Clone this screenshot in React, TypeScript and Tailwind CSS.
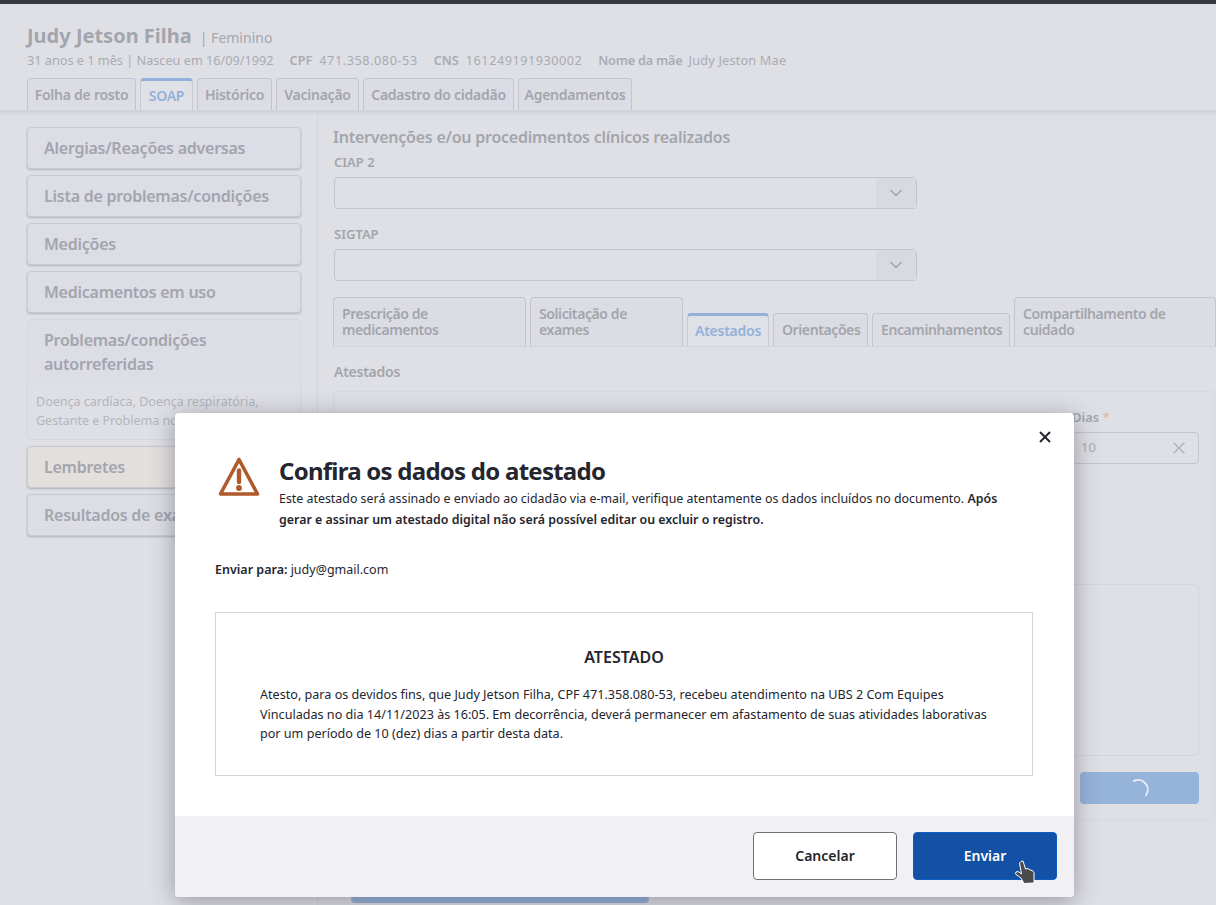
import { ChevronDown, X } from "lucide-react";

const topTabs = [
  { label: "Folha de rosto", w: "w-[109px]" },
  { label: "SOAP", w: "w-[53px]" },
  { label: "Histórico", w: "w-[75px]" },
  { label: "Vacinação", w: "w-[83px]" },
  { label: "Cadastro do cidadão", w: "w-[151px]" },
  { label: "Agendamentos", w: "w-[114px]" },
];

const Tab = ({ label, w, active }: { label: string; w: string; active?: boolean }) => (
  <div
    className={
      w +
      (active
        ? " h-8 flex items-center justify-center border-x border-[#c9cad1] border-t-[3px] border-t-[#93b1da] rounded-t bg-[#e0e1e6] text-[#93b1da] text-sm font-semibold tracking-[-0.25px]"
        : " h-8 flex items-center justify-center border-x border-t border-[#c4c5cc] rounded-t bg-[#dcdde4] text-[#a3a5ad] text-sm font-semibold tracking-[-0.25px]")
    }
  >
    {label}
  </div>
);

const SideCard = ({ label, warm }: { label: string; warm?: boolean }) => (
  <div
    className={
      "h-[42px] flex items-center pl-4 rounded border border-[#c9cad2] shadow-[0_1px_2px_rgba(120,120,135,0.45)] text-base font-semibold tracking-[-0.25px] text-[#a3a5ad] " +
      (warm ? "bg-[#e2dfdc]" : "bg-[#dcdde5]")
    }
  >
    <span className="whitespace-nowrap overflow-hidden">{label}</span>
  </div>
);

const SelectBox = ({ label }: { label: string }) => (
  <div className="w-[583px] ml-px">
    <div className="text-[13px] font-semibold text-[#a3a5ad] mb-[7px] leading-4">{label}</div>
    <div className="h-8 flex justify-end border border-[#c4c5cc] rounded-sm">
      <div className="w-10 flex items-center justify-center bg-[#d9dae1]">
        <ChevronDown size={20} color="#a3a5ad" />
      </div>
    </div>
  </div>
);

const SubTab = ({ label, w, active }: { label: string; w: string; active?: boolean }) => (
  <div
    className={
      w +
      (active
        ? " h-[33px] self-end px-[7px] flex items-center border-x border-[#c9cad1] border-t-[3px] border-t-[#93b1da] rounded-t text-sm font-semibold tracking-[-0.25px] text-[#93b1da] bg-[#e0e1e6]"
        : " self-end pl-2 pr-1 flex items-center border-x border-t border-[#c4c5cc] rounded-t text-sm leading-4 font-semibold tracking-[-0.4px] text-[#a3a5ad] bg-[#dcdde4] min-h-[33px] py-2")
    }
  >
    {label}
  </div>
);

export default function App() {
  return (
    <div className="relative h-[905px] overflow-hidden bg-[#dfe0e5] font-['Noto_Sans',sans-serif]">
      <div className="h-1 bg-[#36383f]" />

      {/* cabeçalho do cidadão */}
      <div className="h-[107px] border-b border-[#d5d6dc] shadow-[0_1px_4px_rgba(120,120,135,0.25)] pl-[27px] pt-[18px]">
        <div className="flex items-baseline leading-6 text-[#a3a5ad]">
          <span className="text-xl font-bold">Judy Jetson Filha</span>
          <span className="ml-2 text-sm">| Feminino</span>
        </div>
        <div className="flex gap-4 mt-[2px] text-[12.7px] leading-4 text-[#a9abb3]">
          <span>31 anos e 1 mês | Nasceu em 16/09/1992</span>
          <span><b className="font-semibold mr-[7px]">CPF</b><span className="tracking-[0.55px]">471.358.080-53</span></span>
          <span><b className="font-semibold mr-[7px]">CNS</b><span className="tracking-[0.5px]">161249191930002</span></span>
          <span><b className="font-semibold tracking-[-0.2px] mr-[6px]">Nome da mãe</b><span className="tracking-[0.2px]">Judy Jeston Mae</span></span>
        </div>
        <div className="flex gap-1 mt-[10px]">
          {topTabs.map((t) => (
            <Tab key={t.label} label={t.label} w={t.w} active={t.label === "SOAP"} />
          ))}
        </div>
      </div>

      <div className="flex h-[794px]">
        {/* coluna esquerda */}
        <div className="w-[318px] shrink-0 border-r border-[#d5d6dc] pl-[27px] pr-4 pt-4 flex flex-col gap-[6px]">
          <SideCard label="Alergias/Reações adversas" />
          <SideCard label="Lista de problemas/condições" />
          <SideCard label="Medições" />
          <SideCard label="Medicamentos em uso" />
          <div className="h-[121px] rounded border border-[#d5d6dc]">
            <div className="h-[64px] bg-[#dcdde5] pl-4 pt-2 text-base leading-6 font-semibold tracking-[-0.25px] text-[#a3a5ad]">
              Problemas/condições autorreferidas
            </div>
            <div className="px-2 pt-2 text-[12.5px] leading-[19px] text-[#b3b5bc]">
              Doença cardíaca, Doença respiratória, Gestante e Problema nos rins
            </div>
          </div>
          <SideCard label="Lembretes" warm />
          <SideCard label="Resultados de exames" />
        </div>

        {/* coluna direita */}
        <div className="flex-1 min-w-0 pl-[15px] pt-4">
          <h2 className="text-base font-semibold tracking-[-0.24px] leading-5 text-[#a3a5ad]">
            Intervenções e/ou procedimentos clínicos realizados
          </h2>
          <div className="mt-[7px] flex flex-col gap-[17px]">
            <SelectBox label="CIAP 2" />
            <SelectBox label="SIGTAP" />
          </div>
          <div className="mt-[17px] flex gap-1 h-[49px] border-b border-[#d5d6dc]">
            <SubTab w="w-[193px]" label="Prescrição de medicamentos" />
            <SubTab w="w-[153px]" label="Solicitação de exames" />
            <SubTab w="w-[82px]" label="Atestados" active />
            <SubTab w="w-[95px]" label="Orientações" />
            <SubTab w="w-[138px]" label="Encaminhamentos" />
            <SubTab w="w-[202px]" label="Compartilhamento de cuidado" />
          </div>
          <div className="mt-[15px] ml-px text-sm font-semibold tracking-[-0.25px] leading-5 text-[#a3a5ad]">Atestados</div>
          <div className="mt-[9px] mr-px h-[430px] border border-[#d8d9df] rounded-sm pl-4 pr-[15px] pt-[17px] flex flex-col items-end">
            <div className="w-[127px]">
              <div className="text-[13px] font-semibold leading-4 text-[#a3a5ad]">
                Dias <span className="text-[#dcb9a4]">*</span>
              </div>
              <div className="mt-[7px] h-8 pl-2 pr-[9px] flex items-center justify-between border border-[#c4c5cc] rounded-sm text-[13px] text-[#a9abb3]">
                10
                <X size={20} color="#b3b5bc" />
              </div>
            </div>
            <div className="mt-[120px] w-[850px] h-[172px] border border-[#d5d6dc] rounded-sm" />
            <div className="mt-4 w-[119px] h-8 rounded-sm bg-[#96b3da] flex items-center justify-center">
              <svg width="24" height="24" viewBox="0 0 24 24" fill="none">
                <path d="M6 5A9.5 9.5 0 0 1 18 19" stroke="#e6ebf4" strokeWidth="2" strokeLinecap="round" />
              </svg>
            </div>
          </div>
          <div className="ml-[18px] mt-[74px] w-[298px] h-2 rounded-sm bg-[#96b3da]" />
        </div>
      </div>

      {/* modal */}
      <div className="absolute left-[175px] top-[413px] w-[899px] h-[484px] rounded-sm bg-white flex flex-col shadow-[0_4px_24px_rgba(60,60,75,0.45)] text-[#24252e]">
        <button className="absolute right-[20px] top-[15px]">
          <X size={18} strokeWidth={2.5} color="#24252e" />
        </button>
        <div className="flex-1 pl-10 pr-[41px] pt-[43px]">
          <div className="flex items-start">
            <svg width="42" height="42" viewBox="0 0 42 42" fill="none" className="ml-[3px] shrink-0">
              <path d="M21 3.5 L39.5 38 H2.5 Z" stroke="#b0592a" strokeWidth="3.6" strokeLinejoin="round" />
              <path d="M21 14.5 V26" stroke="#b0592a" strokeWidth="4.4" strokeLinecap="round" />
              <circle cx="21" cy="32" r="2.9" fill="#b0592a" />
            </svg>
            <div className="ml-[19px] pt-px">
              <h1 className="text-2xl font-bold tracking-[-0.75px] leading-7">Confira os dados do atestado</h1>
              <p className="mt-[3px] text-[12.4px] leading-[21px]">
                Este atestado será assinado e enviado ao cidadão via e-mail, verifique atentamente os dados incluídos no documento.{" "}
                <b className="font-semibold">Após</b>
                <br />
                <b className="font-semibold">gerar e assinar um atestado digital não será possível editar ou excluir o registro.</b>
              </p>
            </div>
          </div>
          <div className="mt-[30px] text-[12.5px] leading-5">
            <b className="font-semibold">Enviar para:</b> judy@gmail.com
          </div>
          <div className="mt-[32px] h-[164px] border border-[#d3d4dc] px-11 pt-[34px]">
            <div className="text-center text-base font-semibold leading-5">ATESTADO</div>
            <p className="mt-[18px] text-[12.6px] leading-[19.5px]">
              Atesto, para os devidos fins, que Judy Jetson Filha, CPF 471.358.080-53, recebeu atendimento na UBS 2 Com Equipes Vinculadas no dia 14/11/2023 às 16:05. Em decorrência, deverá permanecer em afastamento de suas atividades laborativas por um período de 10 (dez) dias a partir desta data.
            </p>
          </div>
        </div>
        <div className="h-[81px] bg-[#f0f0f5] rounded-b-sm flex justify-end items-start gap-4 pt-4 pr-[17px]">
          <button className="w-36 h-12 rounded bg-white border border-[#6f7078] text-sm font-semibold">Cancelar</button>
          <button className="w-36 h-12 rounded bg-[#1351a6] border border-[#0f5cc0] text-sm font-semibold text-white">Enviar</button>
        </div>
      </div>

      {/* cursor da captura */}
      <svg className="absolute left-[1014px] top-[860px]" width="22" height="25" viewBox="0 0 22 25" fill="none">
        <path
          d="M7 1.5 L9 1 L11.5 9 L14 8.5 L16 10 L18.5 10.5 L20 12.5 L20 23 L10 23.5 L7 18 L1.5 14 L2 12 L4 11.5 L7.5 14 L5.5 3 Z"
          fill="#4a4a4a"
          stroke="#ffffff"
          strokeWidth="1"
          strokeLinejoin="round"
        />
      </svg>
    </div>
  );
}
